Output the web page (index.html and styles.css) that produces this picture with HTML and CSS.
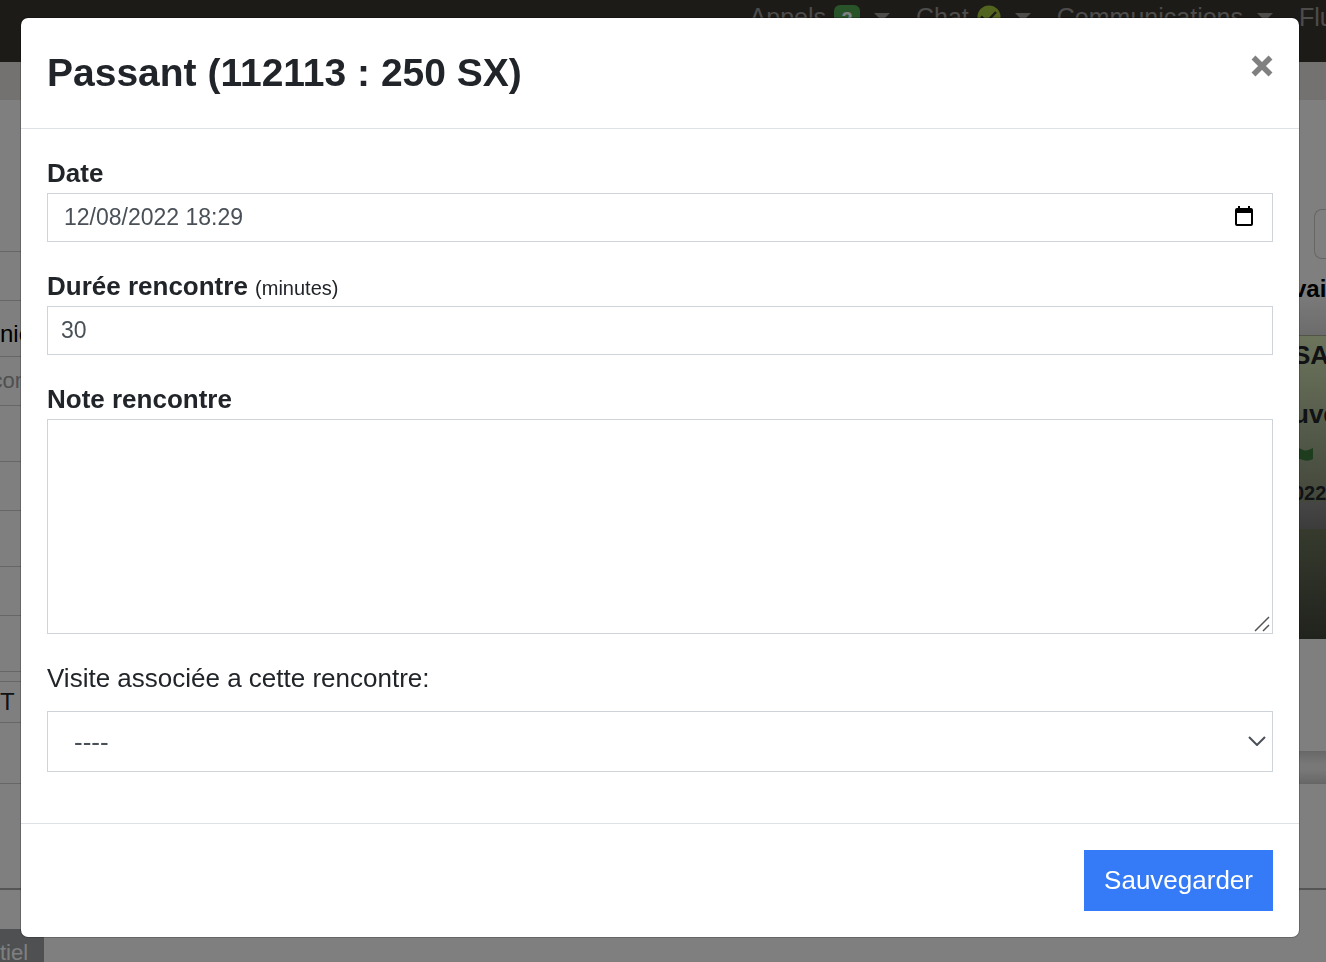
FILE: index.html
```html
<!DOCTYPE html>
<html lang="fr">

<head>
    <meta charset="UTF-8">
    <meta name="viewport" content="width=device-width, initial-scale=1.0">
    <title>Passant (112113 : 250 SX)</title>
    <link rel="stylesheet" href="styles.css">
</head>

<body>
    <div class="page">
        <header class="navbar">
            <nav class="nav">
                <a class="nav__link" href="#">Appels <span class="badge">2</span><span class="caret"></span></a>
                <a class="nav__link" href="#">Chat
                    <svg class="check" viewBox="0 0 24 24" aria-hidden="true">
                        <circle cx="12" cy="12" r="11.5" fill="#a6c83c" />
                        <path d="M4 11.5l5.5 5.5 9.5-10" fill="none" stroke="#383630" stroke-width="2.5" />
                    </svg>
                    <span class="caret"></span></a>
                <a class="nav__link" href="#">Communications <span class="caret"></span></a>
                <a class="nav__link nav__link--last" href="#">Flu</a>
            </nav>
        </header>
        <div class="subbar"></div>
        <main class="content">
            <div class="left">
                <div class="row row--first"></div>
                <div class="row row--small"></div>
                <div class="row row--text">nie</div>
                <div class="row row--small row--muted">con</div>
                <div class="row"></div>
                <div class="row row--small"></div>
                <div class="row"></div>
                <div class="row row--small"></div>
                <div class="row"></div>
                <div class="row row--gap"></div>
                <div class="row row--unit">T</div>
                <div class="row row--tall"></div>
                <div class="row row--last"></div>
                <div class="tag">tiel</div>
            </div>
            <div class="right">
                <div class="right__box"></div>
                <div class="right__title">vai</div>
                <div class="card">
                    <div class="card__line card__line--name">SA</div>
                    <div class="card__line">uve</div>
                    <svg class="flag" viewBox="0 0 20 14" aria-hidden="true">
                        <path d="M0 2c4-2 7-1 10 1 3 1 6 0 10-2v11c-4 2-7 2-10 1s-6-3-10-1z" fill="#3c7a3c" />
                    </svg>
                    <div class="card__line card__line--date">022</div>
                </div>
                <div class="band"></div>
                <div class="dark"></div>
                <div class="blank"></div>
                <div class="shade"></div>
                <div class="panel"></div>
            </div>
        </main>
    </div>

    <div class="modal">
        <form class="modal__dialog" role="dialog" aria-labelledby="modalTitle">
            <div class="modal__header">
                <h2 id="modalTitle">Passant (112113 : 250 SX)</h2>
                <button class="close" type="button" aria-label="Fermer">
                    <svg viewBox="0 0 22 22" aria-hidden="true">
                        <path d="M2.5 2.5l17 17M19.5 2.5l-17 17" stroke="#808080" stroke-width="5.5" />
                    </svg>
                </button>
            </div>
            <div class="modal__body">
                <div class="field">
                    <label for="date">Date</label>
                    <div class="control">
                        <input class="input input--date" type="text" id="date" value="12/08/2022 18:29">
                        <button class="calendar" type="button" aria-label="Choisir une date">
                            <svg viewBox="0 0 18 20" aria-hidden="true">
                                <path d="M3 0h2v2h8V0h2v2h1a2 2 0 0 1 2 2v14a2 2 0 0 1-2 2H2a2 2 0 0 1-2-2V4a2 2 0 0 1 2-2h1zM2 7v11h14V7z" fill="#000" />
                            </svg>
                        </button>
                    </div>
                </div>
                <div class="field">
                    <label for="duree">Durée rencontre <small>(minutes)</small></label>
                    <input class="input" type="text" inputmode="numeric" id="duree" value="30">
                </div>
                <div class="field">
                    <label for="note">Note rencontre</label>
                    <div class="control">
                        <textarea class="input input--note" id="note"></textarea>
                        <svg class="grip" viewBox="0 0 16 16" aria-hidden="true">
                            <path d="M1 15L15 1M9 15l6-6" stroke="#555" stroke-width="1.5" />
                        </svg>
                    </div>
                </div>
                <div class="field">
                    <label class="label--plain" for="visite">Visite associée a cette rencontre:</label>
                    <div class="control">
                        <select class="input input--select" id="visite">
                            <option>----</option>
                        </select>
                        <svg class="chevron" viewBox="0 0 18 10" aria-hidden="true">
                            <path d="M1 1l8 8 8-8" fill="none" stroke="#495057" stroke-width="2" />
                        </svg>
                    </div>
                </div>
            </div>
            <div class="modal__footer">
                <button class="btn" type="submit">Sauvegarder</button>
            </div>
        </form>
    </div>
</body>

</html>
```
FILE: styles.css
```css
* {
  margin: 0;
  padding: 0;
  box-sizing: border-box;
}

body {
  height: 100vh;
  overflow: hidden;
  font-family: 'Liberation Sans', Arial, sans-serif;
  font-size: 26px;
  color: #212529;
  background-color: #ffffff;
}

svg {
  display: block;
}

/* Page behind the modal */
.page {
  height: 100vh;
  overflow: hidden;
}

.navbar {
  height: 62px;
  display: flex;
  justify-content: flex-end;
  background-color: #383630;
}

.nav {
  display: flex;
  gap: 26px;
  height: 34px;
}

.nav__link {
  display: flex;
  align-items: center;
  gap: 8px;
  font-size: 25px;
  color: #9a9896;
  text-decoration: none;
}

.nav__link--last {
  width: 27px;
}

.badge {
  width: 26px;
  height: 24px;
  border-radius: 6px;
  font-size: 20px;
  font-weight: bold;
  line-height: 28px;
  text-align: center;
  color: #ffffff;
  background-color: #53a653;
}

.check {
  width: 24px;
  height: 24px;
}

.caret {
  margin-left: 6px;
  border: 8px solid transparent;
  border-top-color: #9a9896;
  border-bottom: 0;
}

.subbar {
  height: 38px;
  background-color: #e8e4e0;
}

.content {
  display: flex;
  justify-content: space-between;
}

.left {
  width: 44px;
}

.row {
  height: 56px;
  display: flex;
  align-items: center;
  font-size: 24px;
  color: #000000;
  border-bottom: 1px solid #cccccc;
}

.row--first {
  height: 152px;
}

.row--small {
  height: 49px;
}

.row--text {
  padding-top: 11px;
}

.row--muted {
  width: 27px;
  justify-content: flex-end;
  font-size: 22px;
  color: #a0a0a0;
}

.row--gap {
  height: 10px;
}

.row--unit {
  height: 41px;
  color: #212529;
}

.row--tall {
  height: 61px;
}

.row--last {
  height: 106px;
  border-bottom: 2px solid #aaaaaa;
}

.tag {
  height: 48px;
  margin-top: 39px;
  font-size: 22px;
  line-height: 48px;
  color: #ffffff;
  background-color: #9da0a3;
}

.right {
  width: 33px;
  overflow: hidden;
}

.right__box {
  height: 50px;
  margin: 109px 0 0 21px;
  border: 1px solid #cccccc;
  border-right: 0;
  border-radius: 8px 0 0 8px;
}

.right__title {
  height: 76px;
  font-size: 24px;
  font-weight: bold;
  line-height: 60px;
  color: #000000;
  background-image: linear-gradient(#ffffff 30%, #d8d8d8);
}

.card {
  height: 167px;
  border-top: 1px solid #a0aa90;
  background-image: linear-gradient(#d8e8b8, #868f78);
}

.card__line {
  font-weight: bold;
  line-height: 39px;
}

.card__line--name {
  padding-bottom: 20px;
}

.card__line--date {
  font-size: 20px;
  line-height: 28px;
}

.flag {
  width: 20px;
  height: 14px;
  margin: 13px 0 18px;
}

.band {
  height: 27px;
  background-image: linear-gradient(#8c8c8c, #787878);
}

.dark {
  height: 110px;
  background-image: linear-gradient(#6c765c, #42463a);
}

.blank {
  height: 112px;
}

.shade {
  height: 32px;
  background-image: linear-gradient(#d0d0d0, #f0f0f0 40%, #f0f0f0 60%, #d0d0d0);
}

.panel {
  height: 107px;
  border-top: 1px solid #cccccc;
  border-bottom: 2px solid #aaaaaa;
}

/* Modal */
.modal {
  position: fixed;
  inset: 0;
  padding: 17px 26px 17px 20px;
  overflow: auto;
  background-color: rgba(0, 0, 0, 0.5);
}

.modal__dialog {
  border: 1px solid rgba(0, 0, 0, 0.2);
  border-radius: 8px;
  background-color: #ffffff;
  background-clip: padding-box;
}

.modal__header {
  display: flex;
  justify-content: space-between;
  align-items: flex-start;
  padding: 26px;
  border-bottom: 1px solid #dee2e6;
}

h2 {
  font-size: 39px;
  line-height: 58px;
}

.close {
  padding: 11px 0;
  border: none;
  background: transparent;
  cursor: pointer;
}

.close svg {
  width: 22px;
  height: 22px;
}

.modal__body {
  padding: 26px 26px 25px;
}

.field {
  margin-bottom: 26px;
}

label {
  display: block;
  padding-bottom: 2px;
  font-weight: bold;
  line-height: 36px;
}

label small {
  font-size: 20px;
  font-weight: normal;
  line-height: 20px;
}

.label--plain {
  margin-bottom: 13px;
  font-weight: normal;
}

.control {
  position: relative;
}

.input {
  display: block;
  width: 100%;
  height: 49px;
  padding: 0 13px;
  border: 1px solid #ced4da;
  border-radius: 0;
  font-family: inherit;
  font-size: 23px;
  color: #495057;
  background-color: #ffffff;
  outline: none;
}

.input--date {
  padding-left: 16px;
}

.input--note {
  height: 215px;
  padding: 10px 13px;
  resize: none;
}

.input--select {
  height: 61px;
  padding: 0 26px;
  font-size: 26px;
  appearance: none;
}

.calendar {
  position: absolute;
  top: 13px;
  right: 20px;
  border: none;
  background: transparent;
  cursor: pointer;
}

.calendar svg {
  width: 18px;
  height: 20px;
}

.grip {
  position: absolute;
  right: 3px;
  bottom: 2px;
  width: 16px;
  height: 16px;
  pointer-events: none;
}

.chevron {
  position: absolute;
  top: 25px;
  right: 7px;
  width: 18px;
  height: 10px;
  pointer-events: none;
}

.modal__footer {
  display: flex;
  justify-content: flex-end;
  padding: 26px;
  border-top: 1px solid #dee2e6;
}

.btn {
  padding: 15px 20px;
  border: none;
  font-family: inherit;
  font-size: 26px;
  line-height: 31px;
  color: #ffffff;
  background-color: #357af6;
  cursor: pointer;
}
```
